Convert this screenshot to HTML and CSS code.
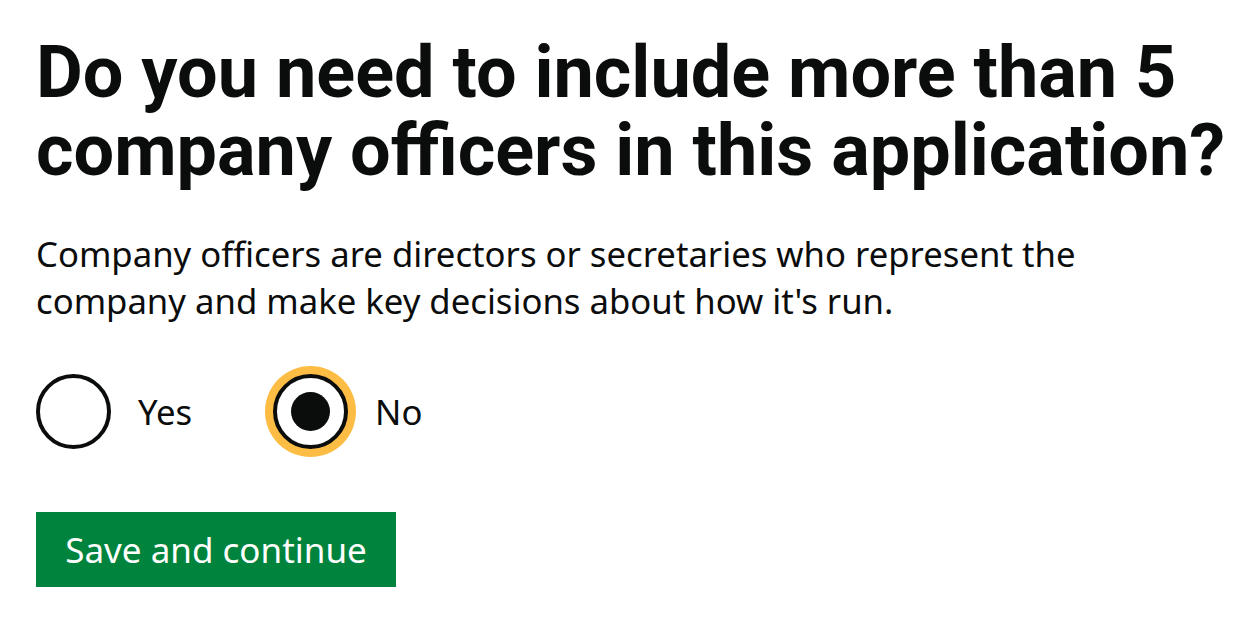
FILE: index.html
```html
<!DOCTYPE html>
<html lang="en">
<head>
<meta charset="utf-8">
<title>Company officers</title>
<link rel="stylesheet" href="styles.css">
</head>
<body>
<main class="page">
  <h1 class="heading">Do you need to include more than 5 company officers in this application?</h1>
  <p class="body-text">Company officers are directors or secretaries who represent the company and make key decisions about how it's run.</p>
  <div class="radios">
    <label class="radio">
      <span class="radio-circle"></span>
      <span class="radio-label">Yes</span>
    </label>
    <label class="radio">
      <span class="radio-circle is-checked is-focused"></span>
      <span class="radio-label">No</span>
    </label>
  </div>
  <button class="button" type="button">Save and continue</button>
</main>
</body>
</html>
```
FILE: styles.css
```css
html, body {
  margin: 0;
  padding: 0;
  background: #ffffff;
}

.page {
  padding: 34px 0 0 36px;
  color: #0b0c0c;
  font-family: "Noto Sans", "Open Sans", sans-serif;
}

.heading {
  margin: 0 0 40px;
  max-width: 1210px;
  font-family: Roboto, "Noto Sans", sans-serif;
  font-weight: 700;
  font-size: 72px;
  line-height: 78px;
  color: #0b0c0c;
}

.body-text {
  margin: 0 0 50px;
  max-width: 1080px;
  font-size: 34.7px;
  line-height: 47px;
  font-weight: 400;
}

.radios {
  display: flex;
  align-items: center;
  margin-bottom: 63px;
}

.radio {
  display: flex;
  align-items: center;
  margin-right: 81px;
}

.radio-circle {
  position: relative;
  box-sizing: border-box;
  width: 75px;
  height: 75px;
  border: 4px solid #0b0c0c;
  border-radius: 50%;
  background: #ffffff;
  flex: none;
}

.radio-circle.is-checked::after {
  content: "";
  position: absolute;
  left: 50%;
  top: 50%;
  width: 39px;
  height: 39px;
  margin: -19.5px 0 0 -19.5px;
  border-radius: 50%;
  background: #0b0c0c;
}

.radio-circle.is-focused {
  box-shadow: 0 0 0 8px #fdbd45;
}

.radio-label {
  padding-left: 27px;
  font-size: 34.7px;
  line-height: 47px;
}

.button {
  display: flex;
  align-items: center;
  justify-content: center;
  box-sizing: border-box;
  width: 360px;
  height: 75px;
  padding: 0;
  border: 0;
  border-radius: 0;
  background: #00843d;
  box-shadow: 0 4px 0 #003a1c;
  color: #ffffff;
  font-family: "Noto Sans", "Open Sans", sans-serif;
  font-size: 35px;
  line-height: 47px;
  cursor: pointer;
}
```
